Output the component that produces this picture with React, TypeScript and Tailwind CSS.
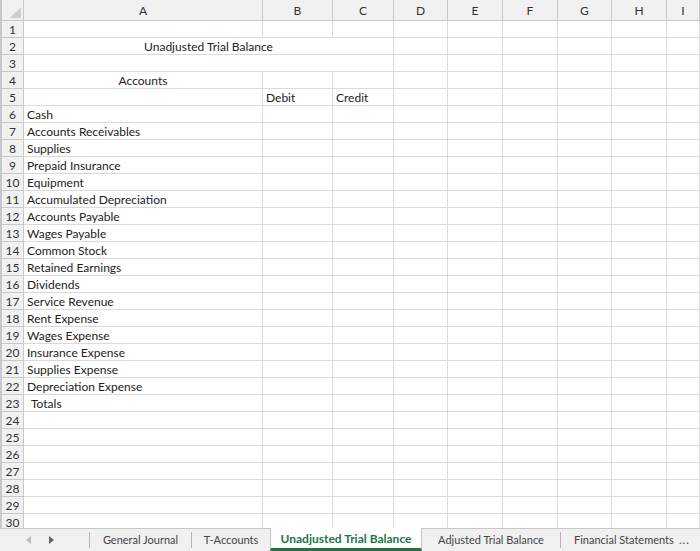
const FONT = "font-['Lato','Open_Sans',sans-serif]";

const columns = ["A", "B", "C", "D", "E", "F", "G", "H", "I"];

const accounts = [
  "Cash",
  "Accounts Receivables",
  "Supplies",
  "Prepaid Insurance",
  "Equipment",
  "Accumulated Depreciation",
  "Accounts Payable",
  "Wages Payable",
  "Common Stock",
  "Retained Earnings",
  "Dividends",
  "Service Revenue",
  "Rent Expense",
  "Wages Expense",
  "Insurance Expense",
  "Supplies Expense",
  "Depreciation Expense",
];

const cell = "h-[17px] border-r border-b border-[#dadada] px-[3px] leading-[17px] whitespace-nowrap overflow-visible";
const rowHead =
  "h-[17px] border-r border-b border-[#c8c8c8] bg-[#f1f1f1] text-center leading-[17px] text-[#333]";

function Row({ n, children }: { n: number; children?: React.ReactNode }) {
  return (
    <>
      <div className={rowHead}>{n}</div>
      {children ?? <EmptyCells from={0} />}
    </>
  );
}

function EmptyCells({ from }: { from: number }) {
  return (
    <>
      {columns.slice(from).map((c) => (
        <div key={c} className={cell} />
      ))}
    </>
  );
}

function Sheet() {
  return (
    <div className="h-[528px] overflow-hidden border-l-2 border-[#c8c8c8]">
      <div className="grid grid-cols-[22px_239px_70px_61px_54px_55px_55px_54px_55px_1fr] text-[12px] text-[#222]">
        <div className="relative h-[21px] border-r border-b border-[#c8c8c8] bg-[#f1f1f1]">
          <svg className="absolute right-[2px] bottom-[2px]" width="11" height="11" viewBox="0 0 11 11">
            <path d="M11 0 L11 11 L0 11 Z" fill="#cdcdcd" />
          </svg>
        </div>
        {columns.map((c) => (
          <div
            key={c}
            className="h-[21px] border-r border-b border-[#c8c8c8] bg-[#f1f1f1] text-center leading-[22px] text-[#333]"
          >
            {c}
          </div>
        ))}

        <Row n={1} />
        <Row n={2}>
          <div className={`${cell} col-span-3 text-center`}>Unadjusted Trial Balance</div>
          <EmptyCells from={3} />
        </Row>
        <Row n={3}>
          <div className={`${cell} col-span-3`} />
          <EmptyCells from={3} />
        </Row>
        <Row n={4}>
          <div className={`${cell} text-center`}>Accounts</div>
          <EmptyCells from={1} />
        </Row>
        <Row n={5}>
          <div className={cell} />
          <div className={cell}>Debit</div>
          <div className={cell}>Credit</div>
          <EmptyCells from={3} />
        </Row>
        {accounts.map((a, i) => (
          <Row key={a} n={i + 6}>
            <div className={cell}>{a}</div>
            <EmptyCells from={1} />
          </Row>
        ))}
        <Row n={23}>
          <div className={`${cell} pl-[7px]`}>Totals</div>
          <EmptyCells from={1} />
        </Row>
        {Array.from({ length: 7 }, (_, i) => (
          <Row key={i} n={i + 24} />
        ))}
      </div>
    </div>
  );
}

function Tabs() {
  return (
    <div className="relative flex h-[23px] items-stretch border-t border-[#c6c6c6] bg-[#f0f0f0] text-[11px] text-[#444]">
      <div className="flex w-[89px] items-center pl-[26px] gap-[18px]">
        <svg width="5" height="8" viewBox="0 0 5 8">
          <path d="M5 0 L0 4 L5 8 Z" fill="#bdbdbd" />
        </svg>
        <svg width="5" height="8" viewBox="0 0 5 8">
          <path d="M0 0 L5 4 L0 8 Z" fill="#666" />
        </svg>
      </div>
      <div className="my-[3px] w-px bg-[#b5b5b5]" />
      <div className="flex w-[101px] items-center justify-center">General Journal</div>
      <div className="my-[3px] w-px bg-[#b5b5b5]" />
      <div className="flex w-[78px] items-center justify-center">T-Accounts</div>
      <div className="-mt-px flex w-[152px] items-center justify-center border-x border-[#c6c6c6] border-b-[3px] border-b-[#217346] bg-white pt-[2px] text-[12px] font-bold text-[#217346]">
        Unadjusted Trial Balance
      </div>
      <div className="flex w-[138px] items-center justify-center">Adjusted Trial Balance</div>
      <div className="my-[3px] w-px bg-[#b5b5b5]" />
      <div className="flex flex-1 items-center pl-[13px]">
        <span className="w-[100px] overflow-hidden whitespace-nowrap">Financial Statements</span>
        <span className="ml-[5px] tracking-[1px]">...</span>
      </div>
    </div>
  );
}

export default function App() {
  return (
    <div className={`h-[551px] w-[700px] overflow-hidden bg-white ${FONT}`}>
      <Sheet />
      <Tabs />
    </div>
  );
}
